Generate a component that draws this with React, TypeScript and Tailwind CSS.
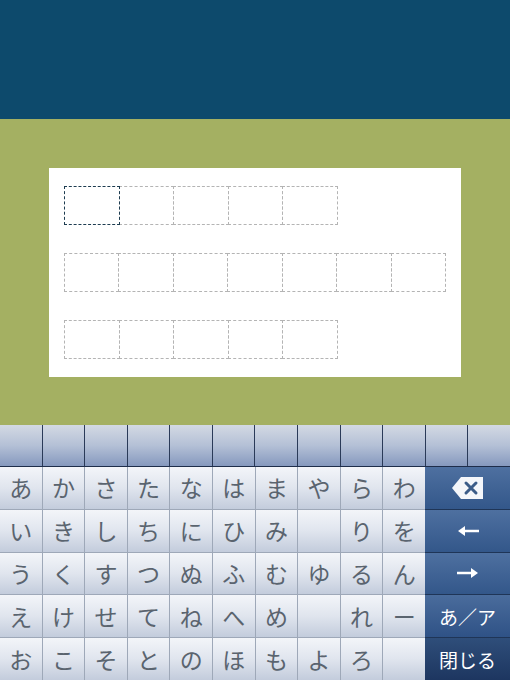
import React from "react"

const rows = [
  ["あ", "か", "さ", "た", "な", "は", "ま", "や", "ら", "わ"],
  ["い", "き", "し", "ち", "に", "ひ", "み", "", "り", "を"],
  ["う", "く", "す", "つ", "ぬ", "ふ", "む", "ゆ", "る", "ん"],
  ["え", "け", "せ", "て", "ね", "へ", "め", "", "れ", "ー"],
  ["お", "こ", "そ", "と", "の", "ほ", "も", "よ", "ろ", ""],
]

const boxRows = [5, 7, 5]

function Boxes({ count, first }: { count: number; first?: boolean }) {
  return (
    <div className="flex">
      {Array.from({ length: count }).map((_, i) => (
        <div
          key={i}
          className={
            i === 0 && first
              ? "relative z-10 h-[39px] w-[55.6px] border border-dashed border-[#1d3c50]"
              : "h-[39px] w-[55.6px] -ml-px border border-dashed border-[#b4b4b4] first:ml-0"
          }
        />
      ))}
    </div>
  )
}

function Backspace() {
  return (
    <svg width="34" height="24" viewBox="0 0 34 24">
      <path d="M10 1 H32 V23 H10 L1 12 Z" fill="#f4f6fa" />
      <path d="M15 7 L25 17 M25 7 L15 17" stroke="#3b5c88" strokeWidth="3" strokeLinecap="round" />
    </svg>
  )
}

function Arrow({ left }: { left?: boolean }) {
  return (
    <svg width="24" height="14" viewBox="0 0 24 14" style={{ transform: left ? "scaleX(-1)" : undefined }}>
      <path d="M1 7 H19" stroke="#ffffff" strokeWidth="2.5" />
      <path d="M15 2 L22 7 L15 12 Z" fill="#ffffff" />
    </svg>
  )
}

export default function App() {
  return (
    <div className="flex h-[680px] w-[510px] flex-col overflow-hidden bg-[#a4b062] font-['Noto_Sans_CJK_JP',sans-serif]">
      <div className="h-[119px] bg-[#0d4a6c]" />

      <div className="flex flex-1 items-start justify-center pt-[49px]">
        <div className="flex w-[412px] flex-col gap-[28px] bg-white px-[15px] py-[18px]">
          {boxRows.map((n, i) => (
            <Boxes key={i} count={n} first={i === 0} />
          ))}
        </div>
      </div>

      <div className="flex h-[255px] flex-col bg-[#2a3a58]">
        <div className="grid h-[42px] grid-cols-12 gap-px border-b border-[#1e2d4a] bg-[#2a3a58]">
          {Array.from({ length: 12 }).map((_, i) => (
            <div key={i} className="bg-gradient-to-b from-[#d3d9e3] via-[#b4c0d6] to-[#8699be]" />
          ))}
        </div>
        <div className="flex flex-1">
          <div className="grid w-[425px] grid-cols-10 grid-rows-5 gap-px bg-[#9ea8b8]">
            {rows.flat().map((k, i) => (
              <div
                key={i}
                className="flex items-center justify-center bg-gradient-to-b from-[#f3f5f9] via-[#e0e5ee] to-[#c3ccdc] text-[23px] leading-none text-[#5a646f]"
              >
                {k}
              </div>
            ))}
          </div>
          <div className="flex w-[85px] flex-col gap-px bg-[#1f3557]">
            <div className="flex flex-1 items-center justify-center bg-gradient-to-b from-[#4e70a0] to-[#33578a]">
              <Backspace />
            </div>
            <div className="flex flex-1 items-center justify-center bg-gradient-to-b from-[#4e70a0] to-[#33578a]">
              <Arrow left />
            </div>
            <div className="flex flex-1 items-center justify-center bg-gradient-to-b from-[#4e70a0] to-[#33578a]">
              <Arrow />
            </div>
            <div className="flex flex-1 items-center justify-center bg-gradient-to-b from-[#4a6c9c] to-[#2f5286] text-[19px] leading-none text-white">
              あ／ア
            </div>
            <div className="flex flex-1 items-center justify-center bg-gradient-to-b from-[#2f4e7a] to-[#1d3660] text-[19px] leading-none text-white">
              閉じる
            </div>
          </div>
        </div>
      </div>
    </div>
  )
}
